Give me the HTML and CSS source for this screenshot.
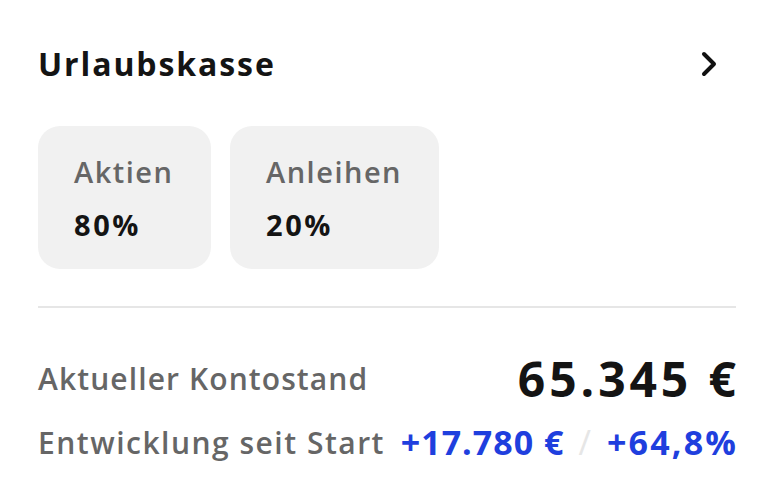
FILE: index.html
```html
<!DOCTYPE html>
<html lang="de">
<head>
<meta charset="utf-8">
<title>Urlaubskasse</title>
<link rel="stylesheet" href="styles.css">
</head>
<body>
<main class="card">
  <header class="head">
    <h1 class="title">Urlaubskasse</h1>
    <svg class="chev" width="18" height="28" viewBox="0 0 18 28" aria-hidden="true"><path d="M4 4 L14 14 L4 24" fill="none" stroke="#111" stroke-width="4" stroke-linecap="round" stroke-linejoin="round"/></svg>
  </header>
  <section class="tiles">
    <div class="tile tile-a"><div class="tile-label">Aktien</div><div class="tile-value">80%</div></div>
    <div class="tile tile-b"><div class="tile-label">Anleihen</div><div class="tile-value">20%</div></div>
  </section>
  <hr class="divider">
  <section class="rows">
    <div class="row"><span class="label label-1">Aktueller Kontostand</span><span class="balance">65.345 €</span></div>
    <div class="row"><span class="label label-2">Entwicklung seit Start</span><span class="dev"><span class="pos pos-a">+17.780 €</span><span class="slash">/</span><span class="pos pos-b">+64,8%</span></span></div>
  </section>
</main>
</body>
</html>
```

FILE: styles.css
```css
html, body { margin: 0; padding: 0; background: #fff; }
body { font-family: "Open Sans", "Noto Sans", sans-serif; color: #141414; }
.card { padding: 42px 36px 0 38px; }
.head { display: flex; align-items: center; justify-content: space-between; height: 44px; }
.title { margin: 0; font-size: 32px; font-weight: 700; letter-spacing: 1.9px; line-height: 44px; color: #141414; }
.chev { margin-right: 18px; }
.tiles { display: flex; gap: 19px; margin-top: 40px; }
.tile { background: #f1f1f1; border-radius: 22px; padding: 28px 0 0 36px; height: 143px; box-sizing: border-box; }
.tile-a { width: 173px; }
.tile-b { width: 209px; }
.tile-label { font-size: 29px; font-weight: 600; color: #666; line-height: 36px; letter-spacing: 1.5px; }
.tile-value { font-size: 29px; font-weight: 700; color: #141414; margin-top: 17px; line-height: 36px; letter-spacing: 2.6px; }
.divider { border: 0; height: 2px; background: #e6e6e6; margin: 37px 0 0; }
.rows { margin-top: 40px; display: flex; flex-direction: column; gap: 4px; }
.row { display: flex; align-items: center; justify-content: space-between; height: 60px; }
.label { font-size: 30px; font-weight: 600; color: #666; }
.label-1 { letter-spacing: 1.1px; }
.label-2 { letter-spacing: 1.5px; }
.balance { font-size: 48px; font-weight: 700; color: #141414; letter-spacing: 3.9px; margin-right: -3.9px; }
.dev { font-size: 34px; font-weight: 700; color: #1f3fde; display: flex; align-items: center; gap: 14px; }
.pos-a { letter-spacing: 1px; }
.pos-b { letter-spacing: 2.2px; margin-right: -2.2px; }
.slash { color: #e6e6e6; font-weight: 400; margin-right: 2px; }
```
